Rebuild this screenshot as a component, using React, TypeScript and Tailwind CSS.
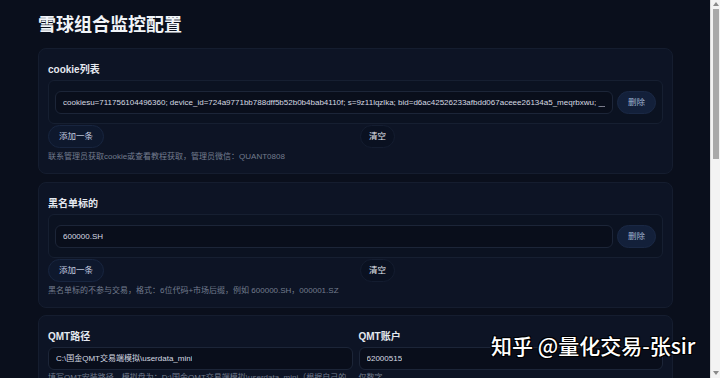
import React from 'react';

const font = "font-['Liberation_Sans','Noto_Sans_CJK_SC',sans-serif]";

const Card: React.FC<{ children: React.ReactNode; className?: string }> = ({ children, className = '' }) => (
  <section className={`rounded-[8px] border border-[#151d2f] bg-[#0d1425] px-[9px] pt-[15px] pb-[11px] ${className}`}>
    {children}
  </section>
);

const Label: React.FC<{ text: string }> = ({ text }) => (
  <div className="text-[10px] leading-[12px] font-bold text-[#e5e9f0]">{text}</div>
);

const Helper: React.FC<{ text: string }> = ({ text }) => (
  <p className="text-[8px] leading-[11px] text-[#737c8e]">{text}</p>
);

const Input: React.FC<{ value: string; className?: string }> = ({ value, className = '' }) => (
  <div
    className={`flex h-[23px] items-center overflow-hidden whitespace-nowrap rounded-[6px] border border-[#1c2538] bg-[#090e1b] px-[7px] text-[8px] text-[#d6dae2] ${className}`}
  >
    <span className="min-w-0 overflow-hidden">{value}</span>
  </div>
);

const PillButton: React.FC<{ text: string; variant: 'add' | 'clear' | 'del' }> = ({ text, variant }) => {
  const styles = {
    add: 'bg-[#0e182d] border-[#18253f] text-[#c5cde0] px-[10px]',
    clear: 'bg-[#0a1121] border-[#141d30] text-[#e6e9ef] px-[8px]',
    del: 'bg-[#13203a] border-[#1a2844] text-[#9fb0d0] px-[10px]'
  };
  return (
    <button className={`block h-[23px] shrink-0 rounded-full border text-[8.5px] leading-[21px] ${styles[variant]}`}>{text}</button>
  );
};

const ListField: React.FC<{ label: string; rows: string[]; helper: string }> = ({ label, rows, helper }) => (
  <Card>
    <Label text={label} />
    <div className="mt-[4px] flex flex-col gap-[4px] rounded-[6px] border border-[#161f31] bg-[#0b1221] px-[6px] pt-[10px] pb-[9px]">
      {rows.map((row) => (
        <div key={row} className="flex items-center gap-[4px]">
          <Input value={row} className="min-w-0 flex-1" />
          <PillButton text="删除" variant="del" />
        </div>
      ))}
    </div>
    <div className="mt-[1px] grid grid-cols-2 gap-[9px]">
      <div className="flex">
        <PillButton text="添加一条" variant="add" />
      </div>
      <div className="flex">
        <PillButton text="清空" variant="clear" />
      </div>
    </div>
    <div className="mt-[3px]">
      <Helper text={helper} />
    </div>
  </Card>
);

const Field: React.FC<{ label: string; value: string; helper: string }> = ({ label, value, helper }) => (
  <div className="flex flex-col">
    <Label text={label} />
    <Input value={value} className="mt-[4px] h-[22px]" />
    <div className="mt-[2px]">
      <Helper text={helper} />
    </div>
  </div>
);

// browser scrollbar as it appears in the capture
const Scrollbar: React.FC = () => (
  <div className="flex w-[10px] shrink-0 flex-col items-center border-l border-[#dcdcdc] bg-[#f3f3f3]">
    <span className="mt-[2px] h-0 w-0 border-x-[3px] border-b-[4px] border-x-transparent border-b-[#8a8a8a]" />
    <div className="mt-[3px] h-[150px] w-[6px] bg-[#a9a9a9]" />
    <div className="flex-1" />
    <span className="mb-[3px] h-0 w-0 border-x-[3px] border-t-[4px] border-x-transparent border-t-[#8a8a8a]" />
  </div>
);

export default function App() {
  return (
    <div className={`relative flex h-screen overflow-hidden bg-[#0a0f1c] ${font}`}>
      <main className="min-w-0 flex-1 overflow-hidden">
        <div className="px-[38px] pt-[12px] pb-[40px]">
          <h1 className="text-[18px] leading-[26px] font-bold text-[#f1f4f8]">雪球组合监控配置</h1>
          <div className="mt-[10px] flex w-[635px] flex-col gap-[8px]">
            <ListField
              label="cookie列表"
              rows={[
                'cookiesu=711756104496360; device_id=724a9771bb788dff5b52b0b4bab4110f; s=9z11lqzlka; bid=d6ac42526233afbdd067aceee26134a5_meqrbxwu; __utma=1.2058231943.1756104497'
              ]}
              helper="联系管理员获取cookie或查看教程获取，管理员微信：QUANT0808"
            />
            <ListField
              label="黑名单标的"
              rows={['600000.SH']}
              helper="黑名单标的不参与交易，格式：6位代码+市场后缀，例如 600000.SH，000001.SZ"
            />
            <Card className="-mt-[1px] pt-[11px]">
              <div className="grid grid-cols-2 gap-[6px]">
                <Field
                  label="QMT路径"
                  value="C:\国金QMT交易端模拟\userdata_mini"
                  helper="填写QMT安装路径，模拟盘为：D:\国金QMT交易端模拟\userdata_mini（根据自己的安装目录填写）"
                />
                <Field label="QMT账户" value="62000515" helper="仅数字" />
              </div>
            </Card>
            <Card>
              <div className="grid grid-cols-2 gap-[6px]">
                <Field label="组合代码" value="ZH3245678" helper="雪球组合代码，以ZH开头" />
                <Field label="监控间隔(秒)" value="10" helper="仅数字" />
              </div>
            </Card>
          </div>
        </div>
      </main>
      <Scrollbar />
      <div className="pointer-events-none absolute left-[491px] top-[334px] whitespace-nowrap font-['Noto_Sans_CJK_SC',sans-serif] text-[21px] leading-[22px] font-medium text-white [text-shadow:0_0_1px_#000,1px_1px_0_#000,-1px_-1px_0_#000,1px_-1px_0_#000,-1px_1px_0_#000]">
        知乎 @量化交易-张sir
      </div>
    </div>
  );
}
